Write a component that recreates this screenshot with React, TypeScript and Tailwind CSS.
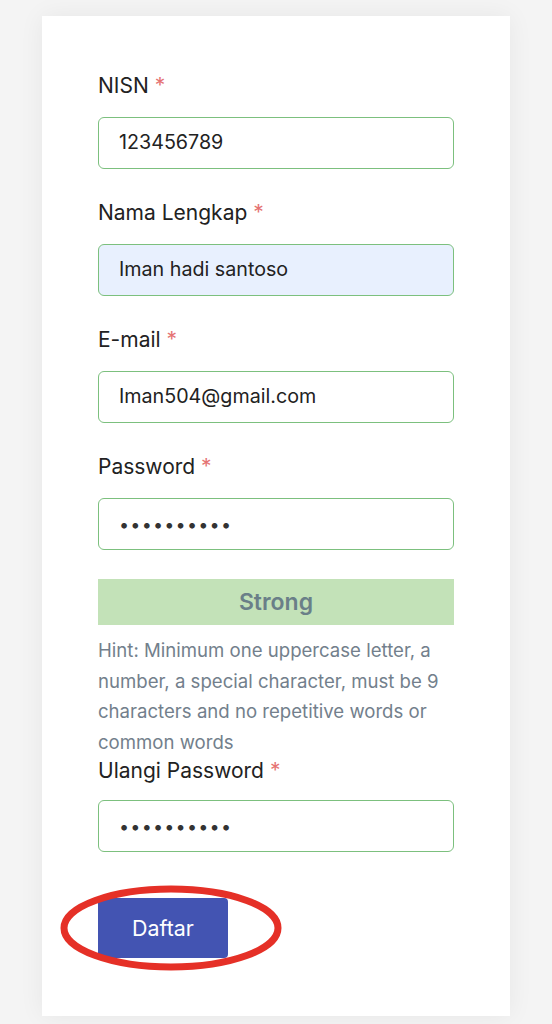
import React from "react";

function Field({
  label,
  value,
  filled,
  password,
  gap = "mt-[17px]",
}: {
  label: string;
  value: string;
  filled?: boolean;
  password?: boolean;
  gap?: string;
}) {
  return (
    <div className="flex flex-col">
      <label className="text-[21px] leading-[28px] text-[#222]">
        {label} <span className="text-[#e57373]">*</span>
      </label>
      <div
        className={`${gap} h-[52px] rounded-[6px] border-[1.5px] border-[#7cc07e] flex items-center pl-[20px] ${
          filled ? "bg-[#e8f0fe]" : "bg-white"
        }`}
      >
        {password ? (
          <span className="text-[18px] tracking-[1.2px] text-[#333]">••••••••••</span>
        ) : (
          <span className="text-[19.7px] text-[#222]">{value}</span>
        )}
      </div>
    </div>
  );
}

export default function App() {
  return (
    <div className="min-h-screen bg-[#f4f4f4] pt-[16px] pb-[8px] font-['Inter',sans-serif]">
      <div className="ml-[42px] w-[468px] bg-white shadow-[0_0_24px_rgba(0,0,0,0.06)] px-[56px] pt-[56px] pb-[58px]">
        <div className="flex flex-col gap-[30px]">
          <Field label="NISN" value="123456789" />
          <Field label="Nama Lengkap" value="Iman hadi santoso" filled />
          <Field label="E-mail" value="Iman504@gmail.com" />
          <Field label="Password" value="" password />
        </div>

        {/* Strength */}
        <div className="mt-[29px] h-[46px] bg-[#c3e2b8] flex items-center justify-center">
          <span className="text-[23px] font-semibold text-[#6a7f88]">Strong</span>
        </div>
        <p className="mt-[10px] text-[18.6px] leading-[30.5px] text-[#737f8c]">
          Hint: Minimum one uppercase letter, a number, a special character, must be 9
          characters and no repetitive words or common words
        </p>

        <Field label="Ulangi Password" value="" password gap="mt-[15px]" />

        {/* Submit */}
        <div className="relative mt-[46px] h-[60px]">
          <button className="h-[60px] w-[130px] rounded-[4px] bg-[#4354b2] text-white text-[21.4px]">
            Daftar
          </button>
          <svg
            className="absolute left-[-40px] top-[-16px] pointer-events-none"
            width="226"
            height="92"
            viewBox="0 0 226 92"
          >
            <ellipse
              cx="113"
              cy="46"
              rx="107"
              ry="39"
              fill="none"
              stroke="#e53027"
              strokeWidth="7"
            />
          </svg>
        </div>
      </div>
    </div>
  );
}
